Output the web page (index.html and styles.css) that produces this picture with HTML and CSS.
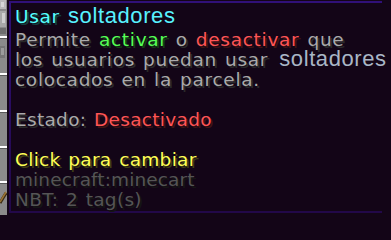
FILE: index.html
```html
<!DOCTYPE html>
<html lang="es">
<head>
<meta charset="utf-8">
<title>Usar soltadores</title>
<link rel="stylesheet" href="styles.css">
</head>
<body>
<div class="scene">
  <svg class="inv" width="7" height="215" viewBox="0 0 7 215" aria-hidden="true">
    <rect width="7" height="215" fill="#8b8b8b"/>
    <rect x="0" y="0" width="6" height="9" fill="#b9b9b9"/>
    <rect x="1" y="2" width="3" height="5" fill="#d6d6d6"/>
    <rect x="0" y="11" width="6" height="16" fill="#a8a8a8"/>
    <rect x="2" y="13" width="3" height="10" fill="#cfcfcf"/>
    <rect x="0" y="28" width="6" height="6" fill="#6e6e6e"/>
    <rect x="0" y="36" width="7" height="2" fill="#ffffff"/>
    <rect x="0" y="38" width="7" height="1" fill="#5a5a5a"/>
    <rect x="0" y="46" width="5" height="12" fill="#777777"/>
    <rect x="1" y="48" width="3" height="7" fill="#9c9c9c"/>
    <rect x="0" y="73" width="7" height="2" fill="#ffffff"/>
    <rect x="0" y="75" width="7" height="1" fill="#5a5a5a"/>
    <rect x="0" y="110" width="7" height="2" fill="#ffffff"/>
    <rect x="0" y="112" width="7" height="1" fill="#5a5a5a"/>
    <rect x="0" y="146" width="7" height="2" fill="#ffffff"/>
    <rect x="0" y="148" width="7" height="1" fill="#5a5a5a"/>
    <rect x="0" y="181" width="7" height="2" fill="#ffffff"/>
    <rect x="0" y="183" width="7" height="1" fill="#5a5a5a"/>
    <path d="M0 203 L6 193" stroke="#3a2a12" stroke-width="3"/>
    <path d="M0 202 L6 192" stroke="#9a7434" stroke-width="1.6"/>
  </svg>
  <div class="tooltip">
    <div class="box">
      <div class="line title"><span class="cyan">Usar</span> <span class="smooth title-word">soltadores</span></div>
      <div class="line gray">Permite <span class="green">activar</span> o <span class="red">desactivar</span> que</div>
      <div class="line gray">los usuarios puedan usar <span class="smooth lore-word">soltadores</span></div>
      <div class="line gray">colocados en la parcela.</div>
      <div class="line"></div>
      <div class="line gray snug">Estado: <span class="red">Desactivado</span></div>
      <div class="line"></div>
      <div class="line yellow snug">Click para cambiar</div>
      <div class="line dark tight">minecraft:minecart</div>
      <div class="line dark snug">NBT: 2 tag(s)</div>
    </div>
  </div>
</div>
</body>
</html>
```

FILE: styles.css
```css
html, body {
  margin: 0;
  padding: 0;
}

body {
  width: 391px;
  height: 215px;
  overflow: hidden;
  background: #130517;
}

.scene {
  display: flex;
  width: 391px;
  height: 215px;
}

.inv {
  display: block;
  flex: 0 0 7px;
}

.tooltip {
  flex: 1;
  background: #130517;
  padding: 1px 0 2px 2px;
  min-width: 0;
}

.box {
  width: 367px;
  border-style: solid;
  border-width: 2px 0 2px 2px;
  border-image: linear-gradient(to bottom, #301078, #220849) 1;
  padding: 4px 0 1.4px 4px;
}

.line {
  font-family: "DejaVu Sans", sans-serif;
  font-size: 18.5px;
  line-height: 20px;
  height: 20px;
  letter-spacing: 0.7px;
  word-spacing: 1.5px;
  white-space: nowrap;
}

.line.snug {
  letter-spacing: 0.3px;
}

.line.tight {
  letter-spacing: 0.1px;
}

.title {
  margin-bottom: 2.5px;
}

.gray {
  color: #aaaaaa;
  text-shadow: 2px 2px 0 #2a2a2a;
}

.green {
  color: #55ff55;
  text-shadow: 2px 2px 0 #153f15;
}

.red {
  color: #ff5555;
  text-shadow: 2px 2px 0 #3f1515;
}

.cyan {
  color: #55ffff;
  text-shadow: 2px 2px 0 #153f3f;
}

.yellow {
  color: #ffff55;
  text-shadow: 2px 2px 0 #3f3f15;
}

.dark {
  color: #555555;
  text-shadow: 2px 2px 0 #151515;
}

.smooth {
  font-family: "Liberation Sans", Arial, sans-serif;
  font-size: 22px;
  letter-spacing: 0.6px;
  word-spacing: 0;
  line-height: 0;
  text-shadow: none;
}

.title-word {
  color: #58f2ff;
}

.lore-word {
  color: #a9b6c6;
  margin-left: 3px;
}
```
